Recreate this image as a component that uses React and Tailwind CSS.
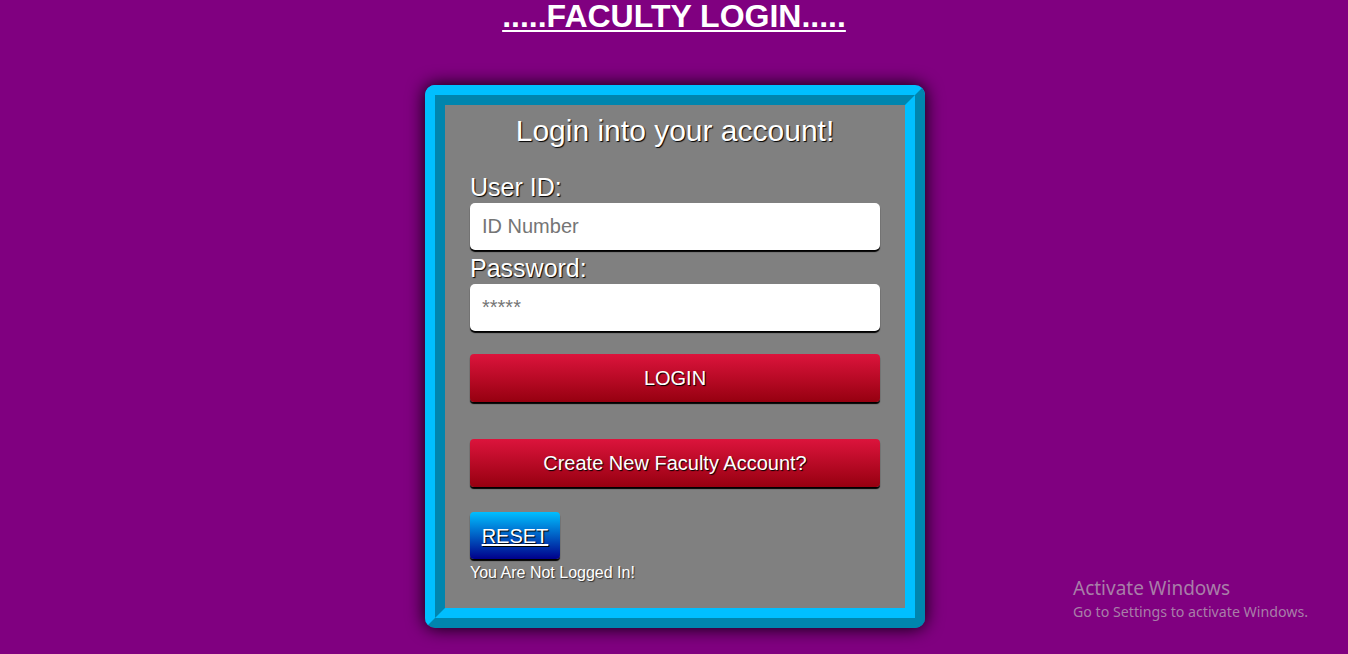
export default function App() {
  const arial = { fontFamily: '"Liberation Sans", Arial, sans-serif' };
  return (
    <div className="relative w-full h-[654px] overflow-hidden bg-[#800080]" style={arial}>
      <h1 className="m-0 text-center text-[32px] leading-[32px] font-bold text-white underline decoration-2 underline-offset-[3px]">
        .....FACULTY LOGIN.....
      </h1>
      <div className="pl-[2px]">
        <div className="mx-auto mt-[53px] w-[500px] rounded-[10px] border-[10px] border-t-[#00bfff] border-l-[#00bfff] border-r-[#0085ae] border-b-[#0085ae] shadow-[0_0_18px_#000]">
          <div className="border-[10px] border-t-[#0085ae] border-l-[#0085ae] border-r-[#00bfff] border-b-[#00bfff]">
            <div className="bg-[#808080] px-[25px] pt-[9px] pb-[26px] text-white">
              <div className="text-center text-[30px] leading-[34px] [text-shadow:1px_1px_1px_#000]">
                Login into your account!
              </div>
              <div className="mt-[24px] text-[25px] leading-[31px] [text-shadow:1px_1px_1px_#000]">User ID:</div>
              <input
                type="text"
                placeholder="ID Number"
                className="block w-full h-[47px] rounded-[5px] bg-white px-[12px] text-[20px] text-black placeholder:text-[#757575] shadow-[0_2px_1px_#000] outline-none"
                style={arial}
              />
              <div className="mt-[3px] text-[25px] leading-[31px] [text-shadow:1px_1px_1px_#000]">Password:</div>
              <input
                type="password"
                placeholder="*****"
                className="block w-full h-[47px] rounded-[5px] bg-white px-[12px] text-[20px] text-black placeholder:text-[#757575] shadow-[0_2px_1px_#000] outline-none"
                style={arial}
              />
              <button
                className="mt-[23px] block w-full h-[48px] rounded-[4px] bg-[linear-gradient(#dc143c,#960010)] text-[20px] text-white shadow-[0_2px_1px_#000] [text-shadow:1px_1px_1px_#000]"
                style={arial}
              >
                LOGIN
              </button>
              <button
                className="mt-[37px] block w-full h-[48px] rounded-[4px] bg-[linear-gradient(#dc143c,#960010)] text-[20px] text-white shadow-[0_2px_1px_#000] [text-shadow:1px_1px_1px_#000]"
                style={arial}
              >
                Create New Faculty Account?
              </button>
              <button
                className="mt-[25px] block w-[90px] h-[47px] rounded-[4px] bg-[linear-gradient(#00bfff,#00008b)] text-[20px] text-white underline shadow-[0_2px_1px_#000] [text-shadow:1px_1px_1px_#000]"
                style={arial}
              >
                RESET
              </button>
              <div className="mt-[5px] text-[16px] leading-[18px] [text-shadow:1px_1px_1px_#333]">You Are Not Logged In!</div>
            </div>
          </div>
        </div>
      </div>
      <div
        className="absolute left-[1073px] top-[575px] text-[#a87ea8]"
        style={{ fontFamily: '"Noto Sans", "Open Sans", sans-serif' }}
      >
        <div className="text-[19px] leading-[27px]">Activate Windows</div>
        <div className="text-[14.2px] leading-[20px]">Go to Settings to activate Windows.</div>
      </div>
    </div>
  );
}
